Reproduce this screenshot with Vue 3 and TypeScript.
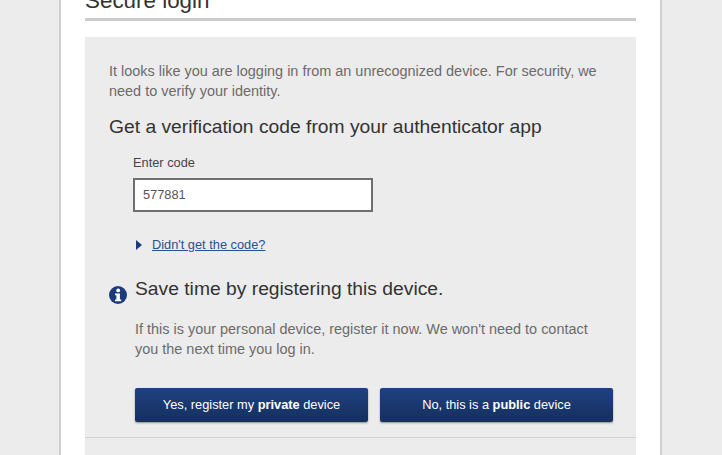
<script setup lang="ts">
const code = '577881'
</script>

<template>
  <div class="page">
    <main class="card">
      <header class="head"><h1>Secure login</h1></header>
      <section class="panel">
        <p class="intro">It looks like you are logging in from an unrecognized device. For security, we need to verify your identity.</p>
        <h2>Get a verification code from your authenticator app</h2>
        <div class="field">
          <label for="code">Enter code</label>
          <input id="code" type="text" :value="code" />
        </div>
        <div class="help">
          <span class="caret"></span>
          <a href="#">Didn't get the code?</a>
        </div>
        <div class="register">
          <svg class="info" viewBox="0 0 18 18" aria-hidden="true">
            <circle cx="9" cy="9" r="9" fill="#1d3b78" />
            <circle cx="9.2" cy="4.4" r="1.9" fill="#fff" />
            <path d="M6 7.4h4.9v6h1.3v1.9H6v-1.9h1.4V9.3H6z" fill="#fff" />
          </svg>
          <div class="register-body">
            <h3>Save time by registering this device.</h3>
            <p>If this is your personal device, register it now. We won't need to contact you the next time you log in.</p>
            <div class="actions">
              <button type="button">Yes, register my <b>private</b> device</button>
              <button type="button">No, this is a <b>public</b> device</button>
            </div>
          </div>
        </div>
        <div class="rule"></div>
      </section>
    </main>
  </div>
</template>

<style>
html, body { margin: 0; background: #ececec; }
</style>

<style scoped>
.page {
  height: 455px;
  overflow: hidden;
  background: #ececec;
  font-family: "Liberation Sans", Arial, sans-serif;
}
.card {
  box-sizing: border-box;
  width: 603px;
  height: 455px;
  margin-left: 59px;
  padding: 0 24px;
  background: #fff;
  border-left: 2px solid #cfcfcf;
  border-right: 2px solid #cfcfcf;
}
.head {
  box-sizing: border-box;
  height: 21px;
  display: flex;
  align-items: flex-end;
  overflow: hidden;
  border-bottom: 3px solid #cccccc;
  padding-bottom: 4px;
}
h1 {
  margin: 0;
  font-size: 22.4px;
  line-height: 26px;
  font-weight: 400;
  color: #333;
  white-space: nowrap;
}
.panel {
  height: 418px;
  margin-top: 16px;
  padding: 24px 0 0;
  background: #ececec;
}
.intro {
  margin: 0 24px;
  font-size: 14.45px;
  line-height: 20px;
  color: #6b6b6b;
}
h2 {
  margin: 13px 24px 0;
  font-size: 19.28px;
  line-height: 26px;
  font-weight: 400;
  color: #333;
}
.field {
  margin: 14px 0 0 48px;
  display: flex;
  flex-direction: column;
}
label {
  font-size: 12.8px;
  line-height: 18px;
  color: #444;
}
input {
  box-sizing: border-box;
  width: 240px;
  height: 34px;
  margin-top: 6px;
  padding: 0 8px 2px;
  border: 2px solid #6f6f6f;
  background: #fff;
  color: #555;
  font: 12.8px "Liberation Sans", Arial, sans-serif;
  outline: none;
}
.help {
  margin: 24px 0 0 51px;
  display: flex;
  align-items: center;
  gap: 10px;
  height: 18px;
}
.caret {
  width: 0;
  height: 0;
  border-left: 6px solid #1d3b78;
  border-top: 5px solid transparent;
  border-bottom: 5px solid transparent;
}
.help a {
  font-size: 12.8px;
  line-height: 18px;
  color: #2a4f94;
}
.register {
  margin: 22px 23px 0 24px;
  display: flex;
  gap: 8px;
}
.info {
  width: 18px;
  height: 18px;
  margin-top: 10px;
  flex: none;
}
.register-body {
  flex: 1;
}
h3 {
  margin: 0;
  font-size: 19.28px;
  line-height: 26px;
  font-weight: 400;
  color: #333;
}
.register-body p {
  margin: 17px 0 0;
  font-size: 14.45px;
  line-height: 20px;
  color: #6b6b6b;
}
.actions {
  margin-top: 29px;
  display: flex;
  gap: 12px;
}
button {
  flex: 1;
  height: 34px;
  padding: 0 0 2px;
  border: 0;
  border-radius: 2px;
  background: linear-gradient(#1f4180, #15305f);
  box-shadow: 0 1px 2px rgba(0, 0, 0, 0.4);
  color: #fff;
  font: 12.8px "Liberation Sans", Arial, sans-serif;
}
.rule {
  margin-top: 15px;
  height: 1px;
  background: #d2d2d2;
}
</style>
